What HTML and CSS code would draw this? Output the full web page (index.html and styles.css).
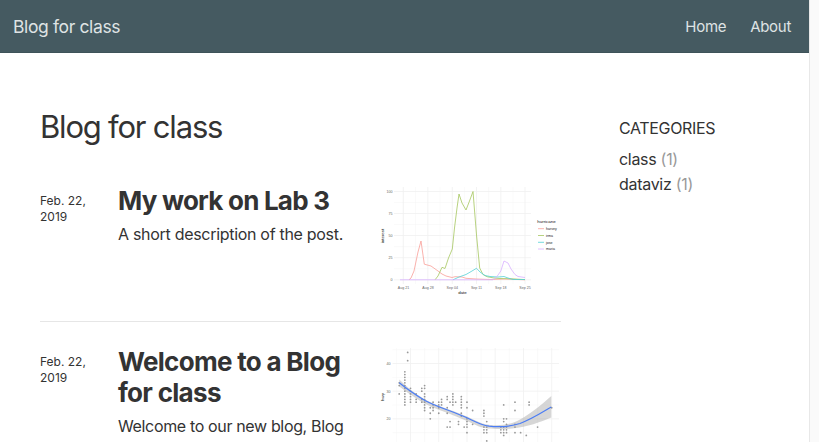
FILE: index.html
```html
<!DOCTYPE html>
<html lang="en">
<head>
<meta charset="utf-8">
<title>Blog for class</title>
<link rel="stylesheet" href="styles.css">
</head>
<body>
<div class="page">
  <header class="navbar">
    <a class="brand">Blog for class</a>
    <nav class="links"><a class="home">Home</a><a class="about">About</a></nav>
  </header>
  <div class="content">
    <main class="posts">
      <h1>Blog for class</h1>
      <article class="post">
        <div class="date">Feb. 22,<br>2019</div>
        <div class="summary">
          <h2 class="t1">My work on Lab 3</h2>
          <p class="d1">A short description of the post.</p>
        </div>
        <svg class="chart" viewBox="377 187 184 110">
          <path class="minor" d="M394 202.5H531M394 224.5H531M394 246.6H531M394 268.7H531M415.5 187V284M440 187V284M464.4 187V284M488.6 187V284M513 187V284"/>
          <path class="major" d="M394 191.5H531M394 213.5H531M394 235.5H531M394 257.7H531M394 279.8H531M403.3 187V284M427.8 187V284M452.3 187V284M476.5 187V284M500.8 187V284M525 187V284"/>
          <path class="line harvey" d="M409 279.8L411 278L414 271L418 252L421 241L424.3 264.2L431 266L438 271L442 274L446 276L452 277.5L455 276.7L462 277L466 278.3L476 279L490 279.5L505 279L525 279.8"/>
          <path class="line irma" d="M435 279.8L438 276L442 267.3L445 268.5L448.5 258L452.3 249L454.5 228L457 208L459 194L462 203L466 210L469.5 201L473 191.5L476.5 235L479.7 268L483 274.5L487 276.7L494 278L500 278.5L511 278.8L525 279.6"/>
          <path class="line jose" d="M453 279.8L459 277L466 274.5L472 271L476.5 268.3L480 272L485 275.5L490 276.5L498 277L504 276.5L508 278L513 279.5H525"/>
          <path class="line maria" d="M400 279.8H493L497 276.5L500.8 271L504 261L508 263L511 269L515 274.5L518 276.5L525 277.5"/>
          <g class="tick end"><text x="392.5" y="193">100</text><text x="392.5" y="215">75</text><text x="392.5" y="237">50</text><text x="392.5" y="259.2">25</text><text x="392.5" y="281.3">0</text></g>
          <g class="tick mid"><text x="403.5" y="289">Aug 21</text><text x="428" y="289">Aug 28</text><text x="452.3" y="289">Sep 04</text><text x="476.5" y="289">Sep 11</text><text x="500.8" y="289">Sep 18</text><text x="525" y="289">Sep 25</text></g>
          <text class="axis mid" x="462.5" y="293.9">date</text>
          <text class="axis mid" transform="translate(384.3 236) rotate(-90)">interest</text>
          <text class="axis" x="537.3" y="223">hurricane</text>
          <path class="key harvey" d="M538 228.7h6"/><path class="key irma" d="M538 235.5h6"/><path class="key jose" d="M538 242.3h6"/><path class="key maria" d="M538 249h6"/>
          <g class="label"><text x="546" y="230">harvey</text><text x="546" y="236.8">irma</text><text x="546" y="243.6">jose</text><text x="546" y="250.3">maria</text></g>
        </svg>
      </article>
      <article class="post">
        <div class="date">Feb. 22,<br>2019</div>
        <div class="summary">
          <h2 class="t2">Welcome to a Blog<br>for class</h2>
          <p class="d2">Welcome to our new blog, Blog</p>
        </div>
        <svg class="chart" viewBox="377 348 184 110">
          <path class="minor" d="M392.5 349.7H559M392.5 377.4H559M392.5 405H559M392.5 432.6H559M396.4 348V445M424.6 348V445M452.9 348V445M481.1 348V445M509.3 348V445M537.6 348V445"/>
          <path class="major" d="M392.5 363.5H559M392.5 391.2H559M392.5 418.8H559M410.5 348V445M438.7 348V445M467 348V445M495.2 348V445M523.5 348V445M551.7 348V445"/>
          <path class="dots" transform="translate(354.02 474.12) scale(28.24 -2.766)" d="M1.6 33h0M1.6 32h0M1.6 29h0M1.8 37h0M1.8 36h0M1.8 35h0M1.8 34h0M1.8 33h0M1.8 32h0M1.8 31h0M1.8 30h0M1.8 29h0M1.8 28h0M1.8 27h0M1.8 26h0M1.8 25h0M1.9 44h0M1.9 41h0M2 31h0M2 30h0M2 29h0M2 28h0M2 27h0M2 26h0M2.2 29h0M2.2 27h0M2.2 26h0M2.4 31h0M2.4 30h0M2.4 27h0M2.4 26h0M2.5 32h0M2.5 31h0M2.5 29h0M2.5 28h0M2.5 27h0M2.5 26h0M2.5 25h0M2.5 24h0M2.5 23h0M2.7 24h0M2.7 22h0M2.7 20h0M2.8 26h0M2.8 25h0M2.8 24h0M2.8 23h0M3 26h0M3 25h0M3 24h0M3 22h0M3.1 27h0M3.1 26h0M3.1 25h0M3.3 28h0M3.3 27h0M3.3 24h0M3.3 22h0M3.3 17h0M3.4 26h0M3.4 19h0M3.4 17h0M3.5 29h0M3.5 28h0M3.5 27h0M3.5 26h0M3.5 25h0M3.6 26h0M3.7 19h0M3.7 18h0M3.8 28h0M3.8 27h0M3.8 26h0M3.8 25h0M3.8 24h0M3.8 22h0M3.8 21h0M3.9 17h0M4 26h0M4 24h0M4 20h0M4 19h0M4 18h0M4 17h0M4 15h0M4.2 23h0M4.2 18h0M4.6 23h0M4.6 22h0M4.6 21h0M4.6 17h0M4.6 16h0M4.6 15h0M4.7 19h0M4.7 17h0M4.7 16h0M4.7 15h0M4.7 12h0M5.2 17h0M5.2 16h0M5.2 15h0M5.3 25h0M5.3 20h0M5.3 19h0M5.3 17h0M5.3 16h0M5.3 15h0M5.3 14h0M5.4 20h0M5.4 18h0M5.4 17h0M5.4 16h0M5.4 15h0M5.7 26h0M5.7 23h0M5.7 18h0M5.7 17h0M5.7 15h0M5.9 15h0M6.1 14h0M6.2 26h0M6.2 25h0M6.5 17h0M7 24h0"/>
          <path class="ribbon" d="M399.3 379.5C407 387 415 394 425 399.5C437 406 452 410 467 416.5C477 421 482 424.3 490 425C503 426 512 424 520 419.5C533 412 543 403.5 551.3 396V417.5C540 422 528 427 512 428.5C500 429.5 485 429 479 426.5C465 420 452 414.5 438 409.5C423 404 410 394.5 399.3 386.5Z"/>
          <path class="smooth" d="M399.3 382.7C407 389 415 394.5 425 400.5C438 407.5 452 411 467 417.8C476 422 481 425 489 426.2C499 427.3 512 426 520 423.5C532 419 542 412.5 551.3 407"/>
          <g class="tick end"><text x="390.5" y="365">40</text><text x="390.5" y="392.7">30</text><text x="390.5" y="420.3">20</text></g>
          <text class="axis mid" transform="translate(384.3 397) rotate(-90)">hwy</text>
        </svg>
      </article>
    </main>
    <aside class="categories">
      <h3>CATEGORIES</h3>
      <ul>
        <li class="c1">class <span>(1)</span></li>
        <li class="c2">dataviz <span>(1)</span></li>
      </ul>
    </aside>
  </div>
</div>
</body>
</html>
```
FILE: styles.css
```css
* { box-sizing: border-box; }
html { overflow: hidden; }
body {
  margin: 0;
  height: 442px;
  overflow: hidden;
  background: #fafafa;
  color: #333;
  font-family: Inter, "Liberation Sans", sans-serif;
}
.page {
  width: 810px;
  height: 442px;
  overflow: hidden;
  background: #fff;
  border-right: 1px solid #e8e8e8;
}
.navbar {
  display: flex;
  align-items: center;
  justify-content: space-between;
  height: 53px;
  padding: 0 18px 0 13px;
  background: #455a61;
  border-bottom: 1px solid #3e5359;
  color: #dfe3e4;
}
.brand { font-size: 17.5px; letter-spacing: -0.37px; }
.links { display: flex; gap: 24px; font-size: 15px; letter-spacing: -0.3px; }
.content { display: flex; justify-content: space-between; padding: 0 40px; }
.posts { width: 521px; }
h1, h2, h3, p, ul { margin: 0; padding: 0; }
h1 {
  margin-top: 54px;
  height: 80px;
  font-size: 31px;
  line-height: 40px;
  font-weight: 400;
  letter-spacing: -1.2px;
}
.post {
  display: grid;
  grid-template-columns: 78px 259px 184px;
  height: 135px;
  margin-bottom: 26px;
  border-bottom: 1px solid #e6e6e6;
}
.date { padding-top: 6px; font-size: 12px; line-height: 16px; letter-spacing: 0; }
h2 {
  margin-top: -2px;
  font-size: 26px;
  line-height: 31px;
  font-weight: 700;
  letter-spacing: -0.7px;
  white-space: nowrap;
}
.t1 { letter-spacing: -0.78px; }
.summary p { margin-top: 6px; font-size: 16px; line-height: 24px; letter-spacing: -0.3px; white-space: nowrap; }
.summary .d2 { letter-spacing: -0.35px; }
.chart { display: block; width: 184px; height: 110px; overflow: visible; font-family: "Liberation Sans", sans-serif; }
.categories { width: 150px; padding-top: 63px; font-size: 16px; letter-spacing: -0.3px; }
h3 { font-size: 16px; line-height: 25px; font-weight: 400; letter-spacing: -0.36px; }
ul { margin-top: 6px; list-style: none; }
li { line-height: 25px; }
li span { color: #999; }
.major, .minor { fill: none; stroke: #f0f0f0; stroke-width: 0.8; }
.minor { stroke: #f5f5f5; stroke-width: 0.5; }
.line { fill: none; stroke-width: 0.8; stroke-linejoin: round; }
.key { stroke-width: 0.8; }
.harvey { stroke: #f99e98; }
.irma { stroke: #a6c660; }
.jose { stroke: #54d2d5; }
.maria { stroke: #d8b0ff; }
.tick { font-size: 3.6px; fill: #666; }
.label { font-size: 3.6px; fill: #222; }
.axis { font-size: 4.4px; fill: #111; }
.end { text-anchor: end; }
.mid { text-anchor: middle; }
.dots { fill: none; stroke: #999; stroke-width: 1.8; stroke-linecap: round; vector-effect: non-scaling-stroke; }
.ribbon { fill: #999; fill-opacity: 0.4; }
.smooth { fill: none; stroke: #4b7df5; stroke-width: 1.2; }
```
